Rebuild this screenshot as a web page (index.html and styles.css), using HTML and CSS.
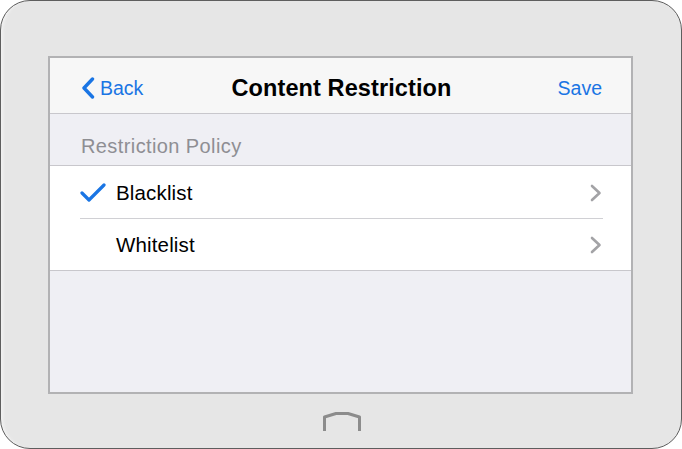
FILE: index.html
```html
<!DOCTYPE html>
<html>
<head>
<meta charset="utf-8">
<link rel="stylesheet" href="styles.css">
</head>
<body>
<div class="device">
  <div class="screen">
    <div class="nav">
      <div class="nav-left">
        <svg class="back-icon" width="14" height="22" viewBox="0 0 14 22"><polyline points="11.5,2 3,11 11.5,20" fill="none" stroke="#1a75e4" stroke-width="3.4" stroke-linecap="round" stroke-linejoin="round"/></svg>
        <span class="nav-btn">Back</span>
      </div>
      <div class="nav-title">Content Restriction</div>
      <div class="nav-right"><span class="nav-btn">Save</span></div>
    </div>
    <div class="section-header">Restriction Policy</div>
    <div class="list">
      <div class="row">
        <div class="check-cell">
          <svg width="26" height="20" viewBox="0 0 26 20"><polyline points="2,10 9,17 24,2" fill="none" stroke="#1a75e4" stroke-width="3.2" stroke-linecap="round" stroke-linejoin="round"/></svg>
        </div>
        <span class="row-label">Blacklist</span>
        <svg class="chev" width="14" height="20" viewBox="0 0 14 20"><polyline points="3,3 10.5,10 3,17" fill="none" stroke="#a3a3a6" stroke-width="2.6" stroke-linecap="round" stroke-linejoin="round"/></svg>
      </div>
      <div class="row">
        <div class="check-cell"></div>
        <span class="row-label">Whitelist</span>
        <svg class="chev" width="14" height="20" viewBox="0 0 14 20"><polyline points="3,3 10.5,10 3,17" fill="none" stroke="#a3a3a6" stroke-width="2.6" stroke-linecap="round" stroke-linejoin="round"/></svg>
      </div>
    </div>
    <div class="filler"></div>
  </div>
  <div class="home">
    <svg width="40" height="22" viewBox="0 0 40 22"><polyline points="2.5,20 2.5,6 14,2.5 26,2.5 37.5,6 37.5,20" fill="none" stroke="#8c8c8c" stroke-width="3" stroke-linejoin="round"/></svg>
  </div>
</div>
</body>
</html>
```

FILE: styles.css
```css
* { box-sizing: border-box; }
html, body {
  margin: 0;
  padding: 0;
  background: #ffffff;
}
body {
  width: 682px;
  height: 449px;
  font-family: "Liberation Sans", Arial, sans-serif;
}
.device {
  width: 682px;
  height: 449px;
  border: 1.5px solid #5e5e5e;
  border-radius: 30px;
  background: #e6e6e6;
  box-shadow: inset 4px 0 3px -2px #f2f2f2;
  padding: 55px 48px 0 47px;
  display: flex;
  flex-direction: column;
  align-items: stretch;
}
.screen {
  height: 338px;
  border: 2px solid #b2b2b4;
  background: #efeff4;
  display: flex;
  flex-direction: column;
}
.nav {
  height: 56px;
  background: #f7f7f7;
  border-bottom: 1px solid #c8c7cc;
  display: flex;
  align-items: center;
  padding: 5px 29px 0 31px;
}
.nav-left, .nav-right {
  flex: 1;
  display: flex;
  align-items: center;
}
.nav-right { justify-content: flex-end; }
.back-icon { margin-right: 5px; margin-top: -1px; }
.nav-btn {
  color: #1a75e4;
  font-size: 19.5px;
}
.nav-title {
  font-weight: bold;
  font-size: 23.5px;
  letter-spacing: 0.1px;
  color: #000;
  white-space: nowrap;
}
.section-header {
  height: 52px;
  border-bottom: 1px solid #c8c7cc;
  color: #8e8e93;
  font-size: 20px;
  letter-spacing: 0.4px;
  padding: 21px 0 0 31px;
}
.list {
  background: #fff;
  border-bottom: 1px solid #c8c7cc;
}
.row {
  height: 52px;
  display: flex;
  align-items: center;
  padding: 2px 28px 0 30px;
  position: relative;
}
.row + .row::before {
  content: "";
  position: absolute;
  top: 0;
  left: 30px;
  right: 28px;
  border-top: 1px solid #d0d0d4;
}
.check-cell {
  width: 36px;
  display: flex;
  align-items: center;
}
.row-label {
  flex: 1;
  font-size: 20.5px;
  letter-spacing: 0.15px;
  color: #000;
}
.filler { flex: 1; }
.home {
  display: flex;
  justify-content: center;
  padding-top: 17px;
  padding-left: 2px;
}
```
